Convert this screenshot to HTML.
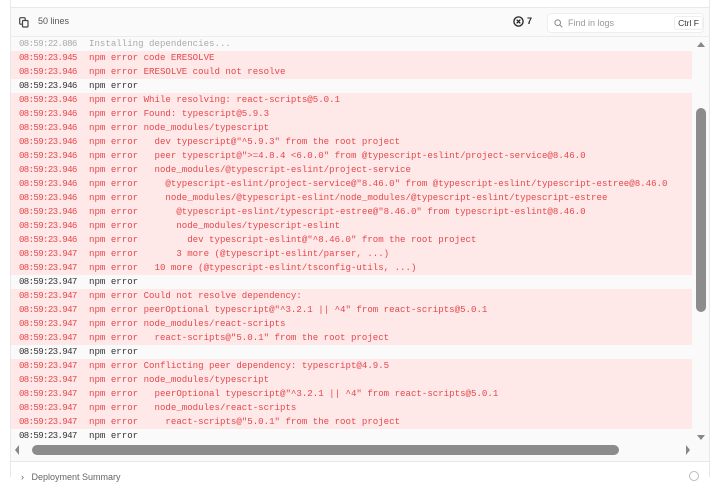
<!DOCTYPE html>
<html><head><style>
*{margin:0;padding:0;box-sizing:border-box}
body{width:720px;height:477px;overflow:hidden;background:#fff;font-family:"Liberation Sans",sans-serif;position:relative}
.panel{position:absolute;left:10px;top:7px;width:700px;height:454px;border:1px solid #e8e8e8;border-bottom:none;background:#fafafa}
.hdr{position:absolute;left:0;top:0;right:0;height:29px;border-bottom:1px solid #ececec;background:#fafafa}
.logs{position:absolute;left:0;top:29px;width:681px;height:406px;overflow:hidden}
.r{height:14px;line-height:14px;font-family:"Liberation Mono",monospace;font-size:9.1px;white-space:pre;color:#333;padding-left:8px}
.r.e{background:#fee8e8;color:#e5484d}
.r.f{color:#aaa}
.r span{display:inline-block;width:70px;letter-spacing:-0.65px}
.vs{position:absolute;left:685px;top:100px;width:10px;height:204px;background:#8c8c8c;border-radius:5px}
.hs{position:absolute;left:21px;top:437px;width:587px;height:10px;background:#8c8c8c;border-radius:5px}
</style></head><body>
<div style="position:absolute;left:10px;top:0;width:700px;height:7px;border-left:1px solid #e8e8e8;border-right:1px solid #e8e8e8"></div>
<div class="panel">
<div class="hdr">
<svg style="position:absolute;left:8px;top:9px" width="10" height="11" viewBox="0 0 10 11"><rect x="0.7" y="0.7" width="5.5" height="6.5" rx="1" fill="none" stroke="#444" stroke-width="1.2"/><rect x="3.5" y="3.5" width="5.5" height="6.5" rx="1" fill="#fafafa" stroke="#444" stroke-width="1.2"/></svg>
<div style="position:absolute;left:27px;top:8px;font-size:9px;color:#555">50 lines</div>
<svg style="position:absolute;left:502px;top:8px" width="11" height="11" viewBox="0 0 11 11"><circle cx="5.5" cy="5.5" r="4.6" fill="none" stroke="#222" stroke-width="1.3"/><path d="M3.7 3.7L7.3 7.3M7.3 3.7L3.7 7.3" stroke="#222" stroke-width="1.3"/></svg>
<div style="position:absolute;left:516px;top:8px;font-size:9px;color:#222;font-weight:bold">7</div>
<div style="position:absolute;left:536px;top:5px;width:157px;height:20px;border:1px solid #eee;border-radius:4px;background:#fff">
<svg style="position:absolute;left:6px;top:5px" width="9" height="9" viewBox="0 0 9 9"><circle cx="3.7" cy="3.7" r="2.8" fill="none" stroke="#888" stroke-width="1"/><path d="M5.8 5.8L8.3 8.3" stroke="#888" stroke-width="1"/></svg>
<div style="position:absolute;left:20px;top:4px;font-size:9px;color:#999">Find in logs</div>
<div style="position:absolute;left:126px;top:2px;width:29px;height:14px;border:1px solid #eee;border-radius:3px;font-size:8.5px;color:#333;line-height:13px;text-align:center">Ctrl F</div>
</div>
</div>
<div class="logs">
<div class="r f"><span>08:59:22.086</span>Installing dependencies...</div>
<div class="r e"><span>08:59:23.945</span>npm error code ERESOLVE</div>
<div class="r e"><span>08:59:23.946</span>npm error ERESOLVE could not resolve</div>
<div class="r"><span>08:59:23.946</span>npm error</div>
<div class="r e"><span>08:59:23.946</span>npm error While resolving: react-scripts@5.0.1</div>
<div class="r e"><span>08:59:23.946</span>npm error Found: typescript@5.9.3</div>
<div class="r e"><span>08:59:23.946</span>npm error node_modules/typescript</div>
<div class="r e"><span>08:59:23.946</span>npm error   dev typescript@"^5.9.3" from the root project</div>
<div class="r e"><span>08:59:23.946</span>npm error   peer typescript@"&gt;=4.8.4 &lt;6.0.0" from @typescript-eslint/project-service@8.46.0</div>
<div class="r e"><span>08:59:23.946</span>npm error   node_modules/@typescript-eslint/project-service</div>
<div class="r e"><span>08:59:23.946</span>npm error     @typescript-eslint/project-service@"8.46.0" from @typescript-eslint/typescript-estree@8.46.0</div>
<div class="r e"><span>08:59:23.946</span>npm error     node_modules/@typescript-eslint/node_modules/@typescript-eslint/typescript-estree</div>
<div class="r e"><span>08:59:23.946</span>npm error       @typescript-eslint/typescript-estree@"8.46.0" from typescript-eslint@8.46.0</div>
<div class="r e"><span>08:59:23.946</span>npm error       node_modules/typescript-eslint</div>
<div class="r e"><span>08:59:23.946</span>npm error         dev typescript-eslint@"^8.46.0" from the root project</div>
<div class="r e"><span>08:59:23.947</span>npm error       3 more (@typescript-eslint/parser, ...)</div>
<div class="r e"><span>08:59:23.947</span>npm error   10 more (@typescript-eslint/tsconfig-utils, ...)</div>
<div class="r"><span>08:59:23.947</span>npm error</div>
<div class="r e"><span>08:59:23.947</span>npm error Could not resolve dependency:</div>
<div class="r e"><span>08:59:23.947</span>npm error peerOptional typescript@"^3.2.1 || ^4" from react-scripts@5.0.1</div>
<div class="r e"><span>08:59:23.947</span>npm error node_modules/react-scripts</div>
<div class="r e"><span>08:59:23.947</span>npm error   react-scripts@"5.0.1" from the root project</div>
<div class="r"><span>08:59:23.947</span>npm error</div>
<div class="r e"><span>08:59:23.947</span>npm error Conflicting peer dependency: typescript@4.9.5</div>
<div class="r e"><span>08:59:23.947</span>npm error node_modules/typescript</div>
<div class="r e"><span>08:59:23.947</span>npm error   peerOptional typescript@"^3.2.1 || ^4" from react-scripts@5.0.1</div>
<div class="r e"><span>08:59:23.947</span>npm error   node_modules/react-scripts</div>
<div class="r e"><span>08:59:23.947</span>npm error     react-scripts@"5.0.1" from the root project</div>
<div class="r"><span>08:59:23.947</span>npm error</div>
</div>
<div style="position:absolute;left:686px;top:34px;width:0;height:0;border-left:4px solid transparent;border-right:4px solid transparent;border-bottom:5px solid #888"></div>
<div style="position:absolute;left:686px;top:427px;width:0;height:0;border-left:4px solid transparent;border-right:4px solid transparent;border-top:5px solid #888"></div>
<div class="vs"></div>
<div style="position:absolute;left:4px;top:437px;width:0;height:0;border-top:5px solid transparent;border-bottom:5px solid transparent;border-right:4px solid #888"></div>
<div style="position:absolute;left:675px;top:437px;width:0;height:0;border-top:5px solid transparent;border-bottom:5px solid transparent;border-left:4px solid #888"></div>
<div class="hs"></div>
</div>
<div style="position:absolute;left:10px;top:461px;width:700px;height:16px;border:1px solid #e8e8e8;border-bottom:none;background:#fff">
<div style="position:absolute;left:10px;top:10px;font-size:9px;color:#666">›&nbsp;&nbsp;&nbsp;Deployment Summary</div>
<div style="position:absolute;left:678px;top:9px;width:10px;height:10px;border:1px solid #bbb;border-radius:50%"></div>
</div>
</body></html>
